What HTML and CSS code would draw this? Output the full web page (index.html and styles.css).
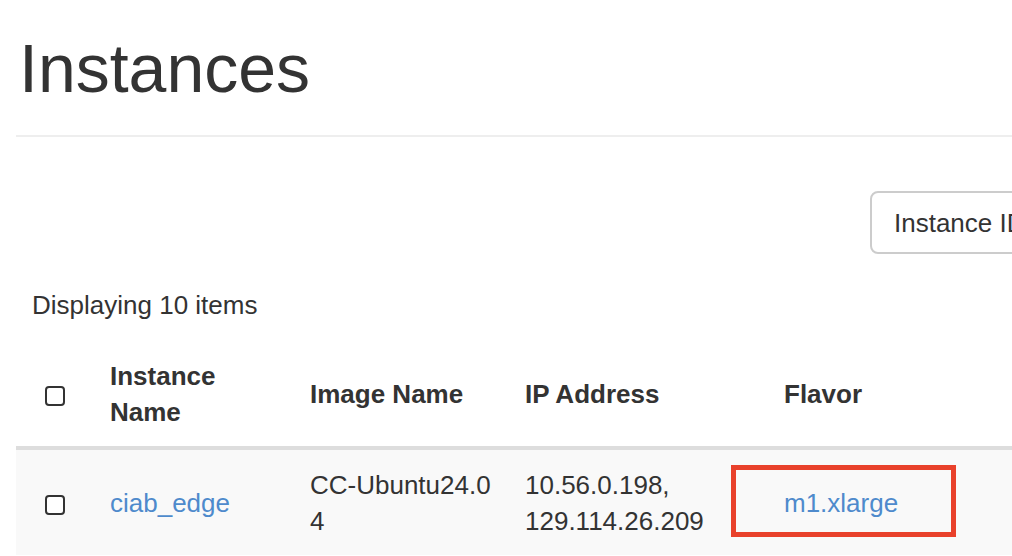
FILE: index.html
```html
<!DOCTYPE html>
<html lang="en">
<head>
<meta charset="utf-8">
<title>Instances</title>
<link rel="stylesheet" href="styles.css">
</head>
<body>
<div class="page">
  <div class="page-header">
    <h1>Instances</h1>
  </div>
  <div class="toolbar">
    <div class="filter">
      <button class="filter-field" type="button">Instance ID =</button>
    </div>
  </div>
  <div class="count">Displaying 10 items</div>
  <table class="table">
    <colgroup>
      <col class="c-check">
      <col class="c-name">
      <col class="c-image">
      <col class="c-ip">
      <col class="c-flavor">
    </colgroup>
    <thead>
      <tr>
        <th class="check"><span class="cb"></span></th>
        <th>Instance Name</th>
        <th>Image Name</th>
        <th>IP Address</th>
        <th>Flavor</th>
      </tr>
    </thead>
    <tbody>
      <tr>
        <td class="check"><span class="cb"></span></td>
        <td><a href="#">ciab_edge</a></td>
        <td class="break">CC-Ubuntu24.04</td>
        <td><div>10.56.0.198,</div><div>129.114.26.209</div></td>
        <td><a class="flavor" href="#">m1.xlarge<span class="mark"></span></a></td>
      </tr>
    </tbody>
  </table>
</div>
</body>
</html>
```
FILE: styles.css
```css
html, body {
  margin: 0;
  padding: 0;
  overflow: hidden;
  background: #fff;
}

body {
  font-family: "Liberation Sans", Helvetica, Arial, sans-serif;
  font-size: 26px;
  line-height: 36px;
  color: #333;
}

.page {
  width: 1200px;
  padding-left: 16px;
}

.page-header {
  border-bottom: 2px solid #eee;
  padding-bottom: 31px;
}

.page-header h1 {
  margin: 32px 0 0 3px;
  font-size: 68px;
  line-height: 72px;
  font-weight: 400;
}

.toolbar {
  display: flex;
  padding-top: 54px;
}

.filter {
  display: flex;
  margin-left: 854px;
}

.filter-field {
  height: 63px;
  border: 2px solid #ccc;
  border-radius: 8px;
  background: #fff;
  font: inherit;
  color: #333;
  padding: 0 22px;
  white-space: nowrap;
}

.count {
  padding: 33px 16px 19px;
}

.table {
  border-collapse: collapse;
  table-layout: fixed;
  width: 1072px;
}

.c-check { width: 78px; }
.c-name { width: 200px; }
.c-image { width: 215px; }
.c-ip { width: 259px; }
.c-flavor { width: 320px; }

.table th {
  text-align: left;
  font-weight: 700;
  padding: 16px;
  vertical-align: middle;
  border-bottom: 4px solid #ddd;
}

.table td {
  padding: 17px 16px 16px;
  vertical-align: middle;
  background: #f9f9f9;
}

.table .check {
  text-align: center;
}

.cb {
  display: inline-block;
  width: 20px;
  height: 20px;
  box-sizing: border-box;
  border: 2px solid #333;
  border-radius: 4px;
  background: #fff;
  vertical-align: middle;
}

.break {
  word-break: break-all;
}

a {
  color: #4e8acc;
  text-decoration: none;
}

.flavor {
  position: relative;
}

.mark {
  position: absolute;
  top: -23px;
  left: -53px;
  width: 225px;
  height: 72px;
  box-sizing: border-box;
  border: 5px solid #e9412b;
}
```
